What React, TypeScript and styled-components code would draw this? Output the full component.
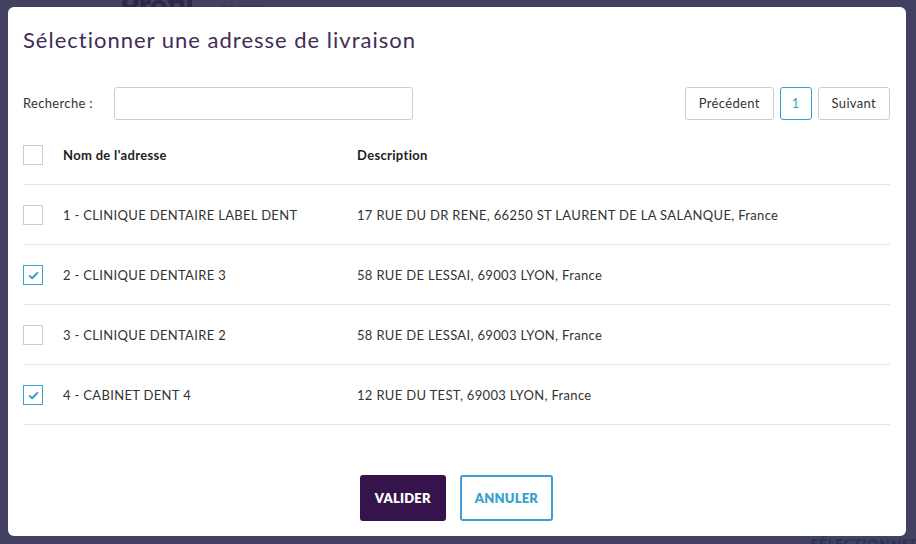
import React, { useState } from 'react';
import styled, { createGlobalStyle } from 'styled-components';

const GlobalStyle = createGlobalStyle`
  html, body {
    margin: 0;
    padding: 0;
    width: 916px;
    height: 544px;
    overflow: hidden;
    font-family: Lato, "Open Sans", Arial, sans-serif;
  }
  * { box-sizing: border-box; }
`;

const Page = styled.div`
  position: relative;
  width: 916px;
  height: 544px;
  background: #f4f4f8;
  overflow: hidden;
`;

const PageHeader = styled.div`
  display: flex;
  align-items: baseline;
  gap: 26px;
  padding: 0 0 0 120px;
  margin-top: -14px;
`;

const PageTitle = styled.h1`
  margin: 0;
  font-size: 30px;
  font-weight: 800;
  color: #000;
`;

const PageEdit = styled.span`
  font-size: 13px;
  font-weight: 700;
  color: #2d3f78;
  letter-spacing: 0.5px;
`;

const PageFooter = styled.div`
  display: flex;
  justify-content: flex-end;
  padding: 514px 0 0 0;
`;

const PageLink = styled.span`
  font-size: 14px;
  font-weight: 800;
  color: #1e50b0;
  letter-spacing: 0.5px;
  margin-right: -4px;
`;

const Overlay = styled.div`
  position: absolute;
  inset: 0;
  background: rgba(48, 46, 80, 0.9);
  display: flex;
  align-items: flex-start;
  padding: 7px 10px 8px 8px;
`;

const Modal = styled.div`
  width: 898px;
  height: 529px;
  background: #fff;
  border-radius: 6px;
  padding: 0 16px 0 15px;
  display: flex;
  flex-direction: column;
  color: #333;
  letter-spacing: 0.33px;
`;

const Title = styled.h2`
  margin: 0;
  padding: 19px 0 0 0;
  height: 79px;
  font-size: 22px;
  font-weight: 400;
  color: #3f2d58;
  letter-spacing: 1px;
`;

const Toolbar = styled.div`
  display: flex;
  align-items: center;
  justify-content: space-between;
  height: 34px;
`;

const SearchGroup = styled.label`
  display: flex;
  align-items: center;
  font-size: 13px;
  color: #333;
`;

const SearchLabel = styled.span`
  width: 91px;
`;

const SearchInput = styled.input`
  width: 299px;
  height: 33px;
  border: 1px solid #ccc;
  border-radius: 3px;
  outline: none;
`;

const Pager = styled.div`
  display: flex;
  gap: 6px;
`;

const PagerButton = styled.button<{ $active?: boolean }>`
  height: 33px;
  padding: 0 ${p => (p.$active ? '11px' : '13px')};
  border: 1px solid ${p => (p.$active ? '#3a9fd0' : '#ccc')};
  border-radius: 3px;
  background: #fff;
  color: ${p => (p.$active ? '#3a9fd0' : '#333')};
  font-family: inherit;
  font-size: 13px;
  letter-spacing: 0.33px;
  cursor: pointer;
`;

const Table = styled.div`
  margin-top: 18px;
  display: flex;
  flex-direction: column;
`;

const Row = styled.div<{ $head?: boolean }>`
  display: grid;
  grid-template-columns: 40px 294px 1fr;
  align-items: center;
  height: ${p => (p.$head ? '47px' : '60px')};
  border-bottom: 1px solid #e6e6e6;
  font-size: 13px;
  font-weight: ${p => (p.$head ? 700 : 400)};
  color: ${p => (p.$head ? '#222' : '#333')};
  padding-top: ${p => (p.$head ? '0' : '1px')};
  & > span {
    margin-top: ${p => (p.$head ? '-12px' : '0')};
  }
`;

const Box = styled.span<{ $checked?: boolean }>`
  width: 20px;
  height: 20px;
  border: 1px solid ${p => (p.$checked ? '#3a9fd0' : '#ccc')};
  background: #fff;
  display: flex;
  align-items: center;
  justify-content: center;
  cursor: pointer;
`;

const Actions = styled.div`
  display: flex;
  justify-content: center;
  gap: 14px;
  margin-top: 50px;
`;

const Button = styled.button<{ $primary?: boolean }>`
  height: 46px;
  padding: 0 13px;
  border-radius: 3px;
  border: 2px solid ${p => (p.$primary ? '#36144b' : '#3a9fd0')};
  background: ${p => (p.$primary ? '#36144b' : '#fff')};
  color: ${p => (p.$primary ? '#fff' : '#3a9fd0')};
  font-family: inherit;
  font-size: 13px;
  font-weight: 800;
  letter-spacing: 0.2px;
  cursor: pointer;
`;

const Check = () => (
  <svg width="11" height="9" viewBox="0 0 11 9" fill="none">
    <path d="M1.8 5l2.4 2.3L9.3 2" stroke="#3a9fd0" strokeWidth="2" strokeLinecap="round" strokeLinejoin="round" />
  </svg>
);

const addresses = [
  { name: '1 - CLINIQUE DENTAIRE LABEL DENT', desc: '17 RUE DU DR RENE, 66250 ST LAURENT DE LA SALANQUE, France', checked: false },
  { name: '2 - CLINIQUE DENTAIRE 3', desc: '58 RUE DE LESSAI, 69003 LYON, France', checked: true },
  { name: '3 - CLINIQUE DENTAIRE 2', desc: '58 RUE DE LESSAI, 69003 LYON, France', checked: false },
  { name: '4 - CABINET DENT 4', desc: '12 RUE DU TEST, 69003 LYON, France', checked: true },
];

const App = () => {
  const [checked, setChecked] = useState(addresses.map(a => a.checked));

  const toggle = (i: number) => setChecked(c => c.map((v, j) => (j === i ? !v : v)));

  return (
    <Page>
      <GlobalStyle />
      <PageHeader>
        <PageTitle>Profil</PageTitle>
        <PageEdit>EDITER ✎</PageEdit>
      </PageHeader>
      <PageFooter>
        <PageLink>SÉLECTIONNER</PageLink>
      </PageFooter>
      <Overlay>
        <Modal>
          <Title>Sélectionner une adresse de livraison</Title>
          <Toolbar>
            <SearchGroup>
              <SearchLabel>Recherche :</SearchLabel>
              <SearchInput type="text" />
            </SearchGroup>
            <Pager>
              <PagerButton>Précédent</PagerButton>
              <PagerButton $active>1</PagerButton>
              <PagerButton>Suivant</PagerButton>
            </Pager>
          </Toolbar>
          <Table>
            <Row $head>
              <span><Box /></span>
              <span>Nom de l'adresse</span>
              <span>Description</span>
            </Row>
            {addresses.map((a, i) => (
              <Row key={a.name}>
                <span>
                  <Box $checked={checked[i]} onClick={() => toggle(i)}>
                    {checked[i] && <Check />}
                  </Box>
                </span>
                <span>{a.name}</span>
                <span>{a.desc}</span>
              </Row>
            ))}
          </Table>
          <Actions>
            <Button $primary>VALIDER</Button>
            <Button>ANNULER</Button>
          </Actions>
        </Modal>
      </Overlay>
    </Page>
  );
};

export default App;
